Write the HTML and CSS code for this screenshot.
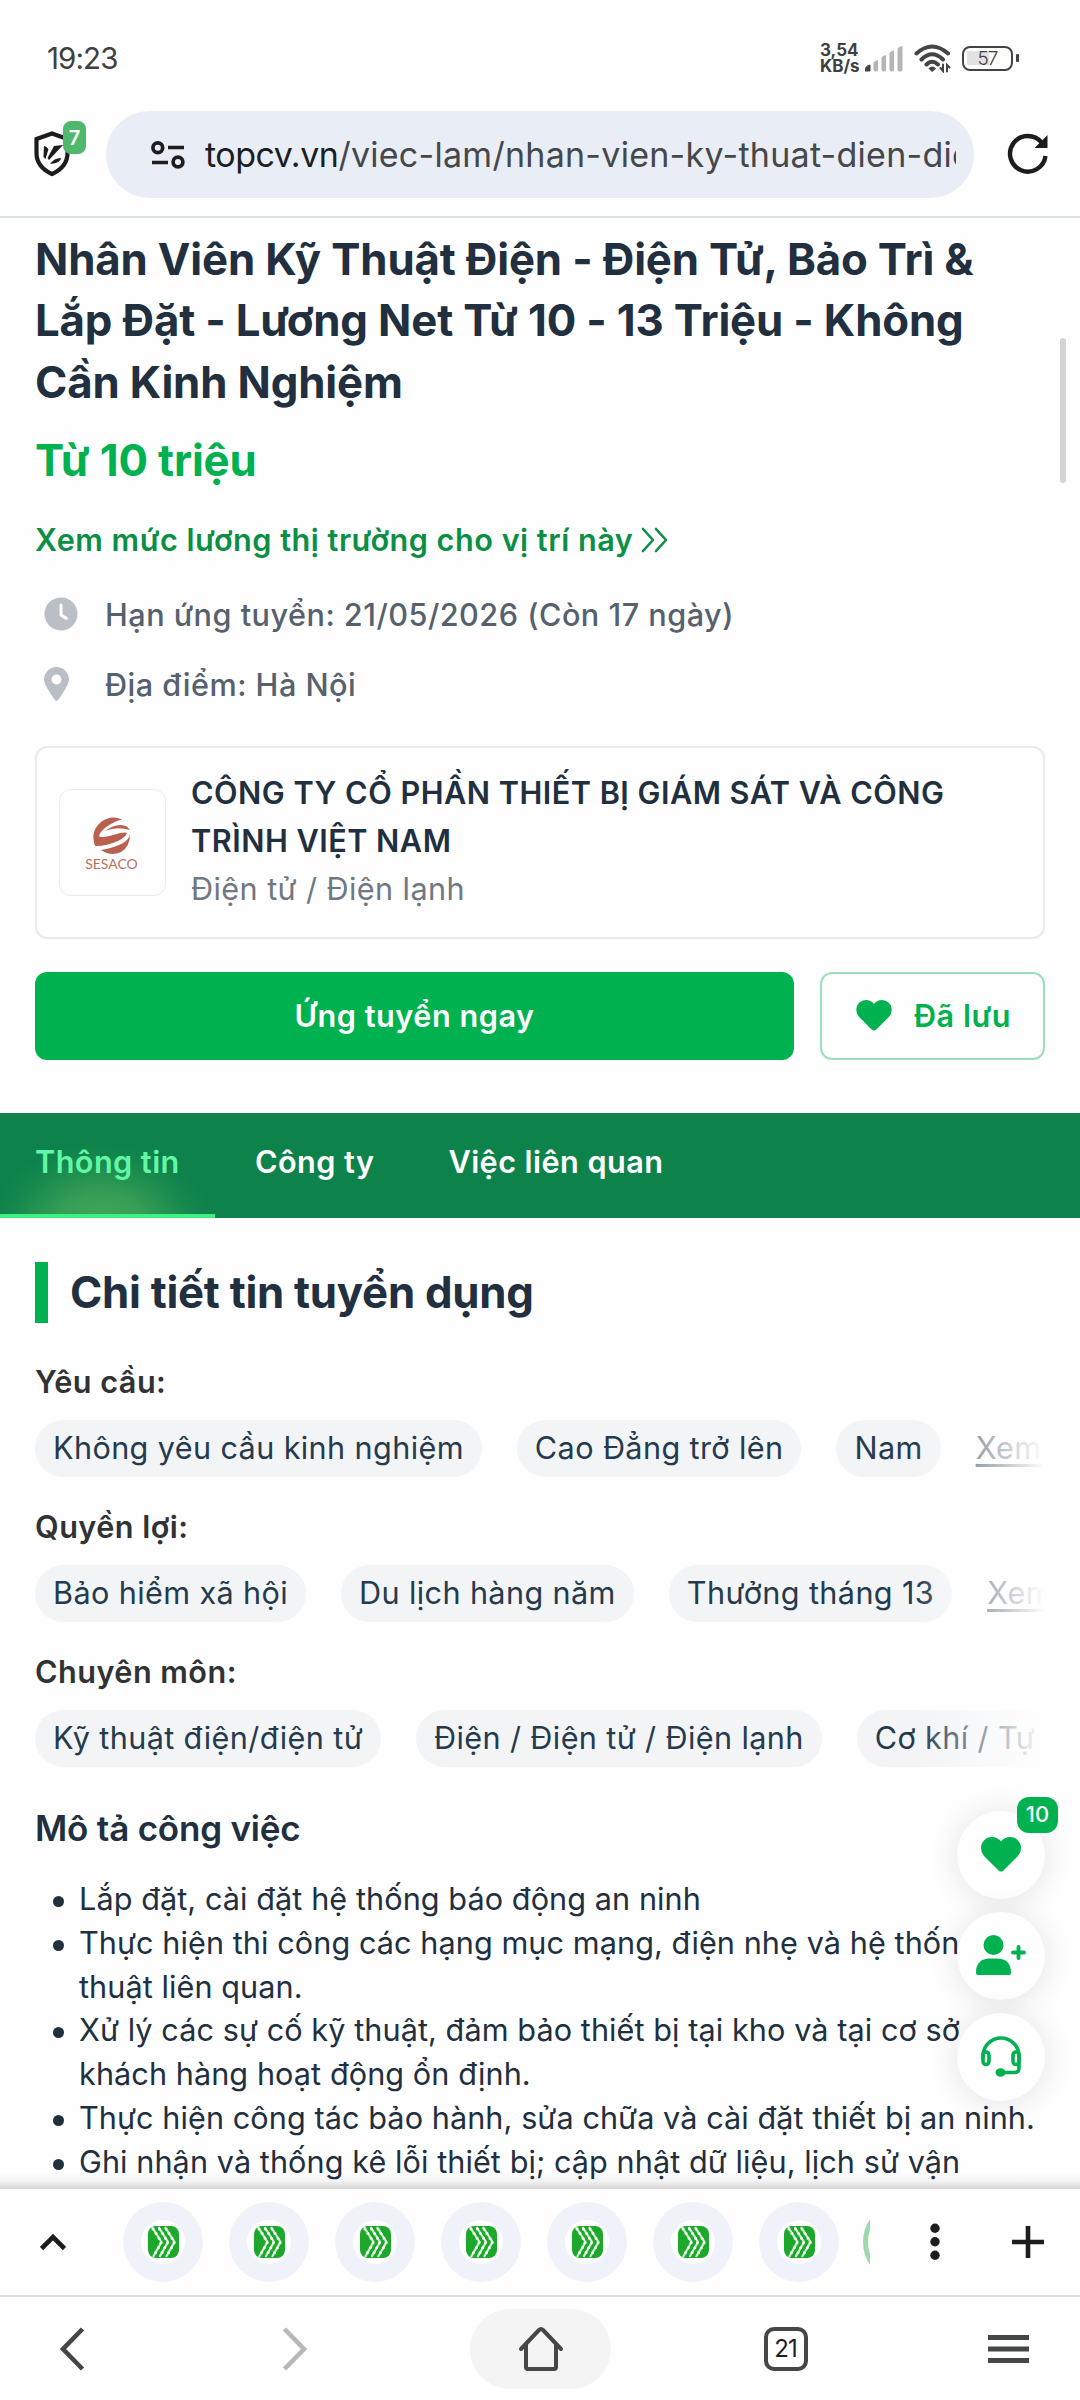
FILE: index.html
```html
<!DOCTYPE html>
<html lang="vi">
<head>
<meta charset="utf-8">
<title>TopCV</title>
<link rel="stylesheet" href="styles.css">
</head>
<body>
<svg class="defs" width="0" height="0">
  <symbol id="heart" viewBox="0 0 40 35"><path d="M20 34.5Q18.600 34.500 17.300 33.200L3 19Q0 15.600 0 11A11 11 0 0 1 11 0Q16.500 0 20 4.500Q23.500 0 29 0A11 11 0 0 1 40 11Q40 15.600 37 19L22.700 33.200Q21.400 34.500 20 34.500Z" fill="currentColor"/></symbol>
  <symbol id="site" viewBox="0 0 31 32">
    <rect width="31" height="32" rx="8" fill="#1da82c"/>
    <g fill="none" stroke="#c9f3cc" stroke-width="2.200"><path d="M4 1L13.500 16L5 31M10.500 1L20 16L11.500 31M17 1L26.500 16L18 31"/></g>
    <g fill="none" stroke="#fff" stroke-width="3" stroke-linecap="round" stroke-dasharray="0 5.500"><path d="M5 3L13.500 16L5 31M11.500 3L20 16L11.500 31M18 3L26.500 16L18 31"/></g>
  </symbol>
</svg>
<div class="phone">
  <header class="status">
    <span class="clock">19:23</span>
    <div class="status-right">
      <span class="speed">3,54<br>KB/s</span>
      <svg class="signal" width="38" height="26" viewBox="0 0 38 26"><path d="M0 25Q0 20 5 19V25Z" fill="#444" stroke="#444" stroke-linejoin="round"/><g fill="#b5b5b5"><path d="M8.500 17Q9 15 13 14V24Q13 25.500 11 25.500T8.500 24ZM16.500 12Q17 10 21 9V24Q21 25.500 19 25.500T16.500 24ZM24.500 7.500Q25 5.500 29 4.500V24Q29 25.500 27 25.500T24.500 24ZM32.500 3Q33 1 37.500 0V24Q37.500 25.500 35 25.500T32.500 24Z"/></g></svg>
      <svg class="wifi" width="37" height="29" viewBox="0 0 37 29" fill="none" stroke="#444" stroke-width="4" stroke-linecap="round"><path d="M2.500 9.500Q18 -4.500 34 9.500M7.500 15.500Q18 5 29 15.500M12.500 20.500Q18 15 24 20.500"/><path d="M15.500 24.500Q18 22 21 24.500L18.200 27Z" fill="#444" stroke-width="1.500"/><path d="M26.500 24L29 27V20.500M33 27.500V21L35.500 23.500" stroke-width="2"/></svg>
      <div class="battery"><span>57</span></div>
    </div>
  </header>
  <div class="address-bar">
    <div class="shield">
      <svg width="36" height="46" viewBox="0 0 36 46"><path d="M18 2.500L33.500 8V22Q33.500 36 18 43Q2.500 36 2.500 22V8Z" fill="none" stroke="#1a1c1e" stroke-width="4.200"/><path d="M10 15Q12 15 14.500 18L11.500 28L9.500 26ZM20 15L29 14L15 29L13.500 27ZM16 33Q20 27 27 27Q27 32 16 33Z" fill="#1a1c1e"/></svg>
      <span class="shield-count">7</span>
    </div>
    <div class="url">
      <svg width="34" height="28" viewBox="0 0 34 28" fill="none" stroke="#1d1d1f" stroke-width="3.700"><circle cx="6.800" cy="6.800" r="4.900"/><path d="M17 6.500H33M1 21.500H17"/><circle cx="27" cy="21" r="4.900"/></svg>
      <p class="url-text"><b>topcv.vn</b>/viec-lam/nhan-vien-ky-thuat-dien-die</p>
    </div>
    <svg class="reload" width="42" height="42" viewBox="0 0 42 42"><path d="M38.500 23A17.800 17.800 0 1 1 35 10" fill="none" stroke="#1d1d1f" stroke-width="4.400"/><path d="M40.500 2V15H27.500Z" fill="#1d1d1f"/></svg>
  </div>

  <main class="page">
    <section class="job">
      <h1>Nhân Viên Kỹ Thuật Điện - Điện Tử, Bảo Trì &amp;<br>Lắp Đặt - Lương Net Từ 10 - 13 Triệu - Không<br>Cần Kinh Nghiệm</h1>
      <p class="salary">Từ 10 triệu</p>
      <a class="market">Xem mức lương thị trường cho vị trí này
        <svg width="27" height="26" viewBox="0 0 27 26" fill="none" stroke="currentColor" stroke-width="2.600" stroke-linecap="round" stroke-linejoin="round"><path d="M2 2L12 13L2 24M15 2L25 13L15 24"/></svg></a>
      <div class="meta"><svg width="34" height="34" viewBox="0 0 34 34"><circle cx="17" cy="17" r="16.500" fill="#b9bfc4"/><path d="M17 8V18L22.500 21.500" fill="none" stroke="#fff" stroke-width="3" stroke-linecap="round" stroke-linejoin="round"/></svg>Hạn ứng tuyển: 21/05/2026 (Còn 17 ngày)</div>
      <div class="meta"><svg width="34" height="34" viewBox="0 0 34 34"><path fill-rule="evenodd" d="M12.500 0A12.500 12.500 0 0 1 25 12.500Q25 18 14 33Q12.500 35 11 33Q0 18 0 12.500A12.500 12.500 0 0 1 12.500 0ZM12.500 7.500A5 5 0 1 0 12.500 17.500A5 5 0 1 0 12.500 7.500Z" fill="#b9bfc4"/></svg>Địa điểm: Hà Nội</div>
      <div class="company">
        <div class="logo">
          <svg width="38" height="38" viewBox="0 0 38 38"><path d="M29 2.500Q18 -2.500 8 5Q-2 13.500 1 25Q1.500 29 3 29Q14 29 25 24Q33 20 34 16Q32 14.500 20 18Q9 21 6.500 19.500Q5 17 12 11Q20 4.500 29 2.500Z" fill="#b9614e"/><path d="M12 14Q24 5 34 9.500L37 13Q24 9 12 14ZM37 17Q36 24 26 28Q16 32 8 33Q18 40 28 35Q37 30 37 17Z" fill="#b9614e"/></svg>
          <span>SESACO</span>
        </div>
        <div class="company-text"><h2>CÔNG TY CỔ PHẦN THIẾT BỊ GIÁM SÁT VÀ CÔNG<br>TRÌNH VIỆT NAM</h2><p>Điện tử / Điện lạnh</p></div>
      </div>
      <div class="actions">
        <div class="apply">Ứng tuyển ngay</div>
        <div class="save"><svg width="36" height="31"><use href="#heart"/></svg>Đã lưu</div>
      </div>
    </section>
    <nav class="tabs"><a class="active">Thông tin</a><a>Công ty</a><a>Việc liên quan</a></nav>
    <section class="detail">
      <h2 class="detail-title">Chi tiết tin tuyển dụng</h2>
      <h3 class="label">Yêu cầu:</h3>
      <div class="tags"><span>Không yêu cầu kinh nghiệm</span><span>Cao Đẳng trở lên</span><span>Nam</span><a>Xem</a></div>
      <h3 class="label">Quyền lợi:</h3>
      <div class="tags"><span>Bảo hiểm xã hội</span><span>Du lịch hàng năm</span><span>Thưởng tháng 13</span><a>Xem</a></div>
      <h3 class="label">Chuyên môn:</h3>
      <div class="tags"><span>Kỹ thuật điện/điện tử</span><span>Điện / Điện tử / Điện lạnh</span><span>Cơ khí / Tự động</span></div>
      <h3 class="desc-title">Mô tả công việc</h3>
      <ul>
        <li>Lắp đặt, cài đặt hệ thống báo động an ninh</li>
        <li>Thực hiện thi công các hạng mục mạng, điện nhẹ và hệ thốn<br>thuật liên quan.</li>
        <li>Xử lý các sự cố kỹ thuật, đảm bảo thiết bị tại kho và tại cơ sở<br>khách hàng hoạt động ổn định.</li>
        <li>Thực hiện công tác bảo hành, sửa chữa và cài đặt thiết bị an ninh.</li>
        <li>Ghi nhận và thống kê lỗi thiết bị; cập nhật dữ liệu, lịch sử vận</li>
      </ul>
    </section>
    <div class="scrollbar"></div>
    <aside class="floating">
      <div class="fab"><svg width="40" height="35"><use href="#heart"/></svg><span class="fab-count">10</span></div>
      <div class="fab"><svg width="50" height="40" viewBox="0 0 50 40" fill="#00b14f"><circle cx="17.500" cy="10" r="10"/><path d="M0 38Q0 23.500 14 23.500H21Q35 23.500 35 38Q35 40 33 40H2Q0 40 0 38Z"/><path d="M42.500 12V23M37 17.500H48" stroke="#00b14f" stroke-width="3.800" stroke-linecap="round"/></svg></div>
      <div class="fab"><svg width="40" height="41" viewBox="0 0 40 41" fill="none" stroke="#00b14f" stroke-width="3.600" stroke-linecap="round" stroke-linejoin="round"><path d="M2 22V20A18 18 0 0 1 38 20V32Q38 36.500 33.500 36.500H22"/><rect x="2" y="16" width="6" height="12.500" rx="3"/><rect x="32" y="16" width="6" height="12.500" rx="3"/><ellipse cx="19.500" cy="36.500" rx="3.200" ry="2.400" fill="#00b14f"/></svg></div>
    </aside>
  </main>

  <div class="tab-strip">
    <svg class="caret" width="26" height="18" viewBox="0 0 26 18" fill="none" stroke="#1d1d1f" stroke-width="4.600"><path d="M1.500 15.500L13 4L24.500 15.500"/></svg>
    <div class="sites">
      <i><b><svg width="31" height="32"><use href="#site"/></svg></b></i>
      <i><b><svg width="31" height="32"><use href="#site"/></svg></b></i>
      <i><b><svg width="31" height="32"><use href="#site"/></svg></b></i>
      <i><b><svg width="31" height="32"><use href="#site"/></svg></b></i>
      <i><b><svg width="31" height="32"><use href="#site"/></svg></b></i>
      <i><b><svg width="31" height="32"><use href="#site"/></svg></b></i>
      <i><b><svg width="31" height="32"><use href="#site"/></svg></b></i>
      <i class="ring"></i>
    </div>
    <svg class="dots" width="10" height="38" viewBox="0 0 10 38" fill="#1d1d1f"><circle cx="5" cy="5.300" r="4.700"/><circle cx="5" cy="18.800" r="4.700"/><circle cx="5" cy="32.300" r="4.700"/></svg>
    <svg width="32" height="32" viewBox="0 0 32 32" stroke="#1d1d1f" stroke-width="4.600"><path d="M16 0V32M0 16H32"/></svg>
  </div>
  <nav class="bottom-nav">
    <svg width="26" height="44" viewBox="0 0 26 44" fill="none" stroke="#444746" stroke-width="4.600"><path d="M23.500 2L4 22L23.500 42"/></svg>
    <svg width="26" height="44" viewBox="0 0 26 44" fill="none" stroke="#b8b8b8" stroke-width="4.600"><path d="M2.500 2L22 22L2.500 42"/></svg>
    <div class="home"><svg width="46" height="46" viewBox="0 0 46 46" fill="none" stroke="#444746" stroke-width="4" stroke-linecap="round" stroke-linejoin="round"><path d="M3 23L21 4Q23 2 25 4L43 23M8 18.500V41Q8 43 10 43H36Q38 43 38 41V18.500"/></svg></div>
    <div class="tab-count">21</div>
    <svg width="41" height="28" viewBox="0 0 41 28" stroke="#444746" stroke-width="5"><path d="M0 2.500H41M0 14H41M0 25.500H41"/></svg>
  </nav>
</div>
</body>
</html>
```
FILE: styles.css
```css
/* 1rem is 10 layout units; the device scale is 2.1875 */
html { font-size: 21.875px; }
* { box-sizing: border-box; }
body, h1, h2, h3, p, ul { margin: 0; padding: 0; }
body { background: #fff; font-family: Inter, "Noto Sans", sans-serif; font-optical-sizing: none; color: #212f3f; }
svg { display: block; flex: none; }
.defs { position: absolute; }
.phone { width: 1080px; height: 2400px; display: flex; flex-direction: column; overflow: hidden; background: #fefefe; }

.status { height: 111px; flex: none; display: flex; align-items: center; justify-content: space-between; padding: 5px 63px 0 47px; color: #404040; }
.clock { font-size: 29.500px; letter-spacing: -0.9px; }
.status-right { display: flex; align-items: center; }
.speed { font-size: 17px; line-height: 16.500px; font-weight: 700; width: 43px; white-space: nowrap; }
.signal { margin: 2px 11px 0 2px; }
.wifi { margin-right: 11px; }
.battery { width: 51px; height: 25px; border: 2.500px solid #444; border-radius: 8px; position: relative; display: flex; align-items: center; justify-content: center; font-size: 19px; letter-spacing: -1px; font-weight: 300; background: linear-gradient(#e2e2e2, #e2e2e2) 3px 50% / 22px 14px no-repeat; margin-right: 4px; }
.battery::after { content: ""; position: absolute; right: -8px; top: 6px; width: 3px; height: 8px; border-radius: 1px; background: #444; }

.address-bar { height: 107px; flex: none; display: flex; align-items: flex-start; border-bottom: 2px solid #dde1e6; padding-right: 31px; }
.shield { width: 106px; flex: none; position: relative; padding: 20px 0 0 34px; }
.shield-count { position: absolute; left: 63px; top: 10px; width: 23px; height: 33px; border-radius: 8px; background: #50b86c; color: #fff; font-weight: 600; font-size: 20px; line-height: 34px; text-align: center; }
.url { width: 868px; height: 87px; border-radius: 44px; background: #e8edf6; display: flex; align-items: center; padding: 0 18px 0 45px; gap: 20px; }
.url-text { overflow: hidden; white-space: nowrap; font-size: 34px; line-height: 50px; color: #454749; letter-spacing: .27px; }
.url-text b { font-weight: 400; color: #1d1d1f; letter-spacing: -.5px; }
.reload { margin: 22px 0 0 auto; }

.page { height: 1971px; flex: none; overflow: hidden; position: relative; }
.page::after { content: ""; position: absolute; left: 0; right: 0; bottom: 0; height: 17px; background: linear-gradient(rgba(0,0,0,0), rgba(0,0,0,.04) 50%, rgba(0,0,0,.16)); }
.job { height: 895px; padding: 11px 35px 0; }
h1, .salary { font-size: 2rem; line-height: 2.8rem; font-weight: 700; letter-spacing: -0.15px; white-space: nowrap; }
.salary { margin-top: .8rem; color: #00b14f; }
.market { display: flex; align-items: center; gap: 8px; margin: 1.2rem 0 31px; font-size: 1.4rem; line-height: 2rem; font-weight: 600; letter-spacing: .52px; color: #0a8f45; white-space: nowrap; }
.meta { display: flex; align-items: center; gap: 27px; height: 2rem; margin: 0 0 1.2rem 9px; font-size: 1.4rem; font-weight: 500; letter-spacing: .5px; color: #56616d; }
.company { height: 193px; margin-top: 40px; border: 2px solid #e9eaec; border-radius: 12px; display: flex; align-items: center; padding-left: 22px; gap: 25px; }
.logo { width: 107px; height: 107px; border: 1px solid #e9eaec; border-radius: 12px; display: flex; flex-direction: column; align-items: center; padding: 27px 2px 0 0; flex: none; }
.logo span { font-size: 14px; line-height: 18px; color: #b9705f; font-family: Lato, sans-serif; }
.company-text { font-size: 1.4rem; line-height: 2.2rem; white-space: nowrap; padding-bottom: 3px; }
.company h2 { font-size: 1.4rem; font-weight: 600; letter-spacing: .5px; }
.company p { color: #6f7882; letter-spacing: .42px; }
.actions { display: flex; gap: 26px; margin-top: 33px; height: 88px; font-size: 1.4rem; font-weight: 600; letter-spacing: .55px; }
.apply { width: 759px; padding-bottom: 2px; border-radius: 12px; background: #00b14f; color: #fff; display: flex; align-items: center; justify-content: center; }
.save { flex: 1; padding: 0 0 2px 2px; border: 2px solid #9edfb9; border-radius: 12px; color: #00b14f; display: flex; align-items: center; justify-content: center; gap: 22px; white-space: nowrap; }

.tabs { height: 105px; background: #0d824b; display: flex; color: #fff; font-size: 1.4rem; font-weight: 600; line-height: 98px; letter-spacing: .45px; }
.tabs a { padding: 0 37px; white-space: nowrap; }
.tabs a:nth-child(2) { padding-left: 40px; }
.tabs .active { padding: 0 0 0 35px; width: 215px; color: #63f7a5; border-bottom: 4px solid #3df083; background: radial-gradient(ellipse 112px 84px at 47% 112%, rgba(92,184,96,.68) 0, rgba(92,184,96,.52) 38%, rgba(92,184,96,.22) 68%, rgba(92,184,96,.06) 86%, rgba(92,184,96,0) 100%); }

.detail { padding: 44px 35px 0; }
.detail-title { border-left: 13px solid #00b14f; padding-left: 22px; font-size: 2rem; line-height: 2.8rem; letter-spacing: -.27px; font-weight: 700; }
.label { margin-top: 28.250px; font-size: 1.4rem; line-height: 2rem; font-weight: 600; letter-spacing: .47px; color: #303235; }
.detail-title + .label { margin-top: 37px; }
.tags { display: flex; gap: 35px; margin-top: 16px; height: 57px; overflow: hidden; position: relative; white-space: nowrap; font-size: 1.4rem; line-height: 55px; letter-spacing: .38px; color: #263a4d; }
.tags span { background: #f2f4f6; border-radius: 29px; padding: 0 18px; flex: none; }
.tags a { text-decoration: underline; text-underline-offset: 5px; flex: none; color: #3d4c5c; }
.tags::after { content: ""; position: absolute; right: 0; top: 0; width: 131px; height: 100%; background: linear-gradient(to right, rgba(254,254,254,0), #fefefe); }
.desc-title { margin-top: 34.500px; font-size: 1.6rem; line-height: 2.4rem; font-weight: 600; letter-spacing: -.2px; }
ul { list-style: none; margin-top: 23px; font-size: 1.4rem; line-height: 2rem; letter-spacing: .08px; white-space: nowrap; }
li { padding-left: 44px; position: relative; }
li::before { content: ""; position: absolute; left: 18px; top: 19px; width: 11px; height: 11px; border-radius: 50%; background: #212f3f; }
.scrollbar { position: absolute; left: 1060px; top: 120px; width: 6px; height: 145px; border-radius: 3px; background: #d4d4d4; }
.floating { position: absolute; left: 957px; top: 1593px; display: flex; flex-direction: column; gap: 13px; }
.fab { width: 88px; height: 88px; border-radius: 50%; background: #fefefe; box-shadow: 0 2px 32px rgba(0,0,0,.11); display: flex; align-items: center; justify-content: center; padding-bottom: 2px; color: #00b14f; position: relative; }
.fab-count { position: absolute; left: 60px; top: -14px; width: 41px; height: 36px; border-radius: 12px; background: #00b14f; color: #fff; font-size: 22px; line-height: 35px; text-align: center; font-weight: 500; }

.tab-strip { height: 108px; flex: none; border-bottom: 2px solid #dedede; display: flex; align-items: center; padding: 0 36px 0 40px; }
.caret { margin: 0 57px 0 0; }
.sites { width: 747px; flex: none; display: flex; gap: 26px; overflow: hidden; }
.sites i { width: 80px; height: 80px; border-radius: 50%; background: #eff3f9; display: flex; align-items: center; justify-content: center; flex: none; }
.sites b { width: 44px; height: 44px; border-radius: 50%; background: #fff; display: flex; align-items: center; justify-content: center; }
.sites .ring { background: none; border: 5px solid #9ed8ae; margin-left: -2px; }
.dots { margin: 0 72px 0 60px; }
.bottom-nav { flex: 1; display: grid; grid-template-columns: 144px 302px 189px 301px 144px; align-items: center; justify-items: center; }
.home { width: 141px; height: 80px; border-radius: 40px; background: #f4f4f4; display: flex; align-items: center; justify-content: center; }
.tab-count { width: 44px; height: 44px; border: 4px solid #444746; border-radius: 10px; font-size: 24px; line-height: 36px; text-align: center; color: #1d1d1f; letter-spacing: -1px; }
```
